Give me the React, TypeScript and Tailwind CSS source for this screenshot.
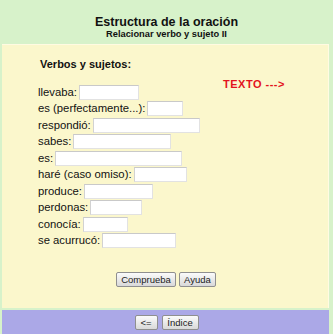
const rows = [
    { label: "llevaba:", w: 60 },
    { label: "es (perfectamente...):", w: 36 },
    { label: "respondió:", w: 107 },
    { label: "sabes:", w: 98 },
    { label: "es:", w: 127 },
    { label: "haré (caso omiso):", w: 53 },
    { label: "produce:", w: 69 },
    { label: "perdonas:", w: 52 },
    { label: "conocía:", w: 45 },
    { label: "se acurrucó:", w: 74 }
];

const Btn = ({ text, w }: { text: string; w: number }) => (
    <button
        className="h-[15px] rounded-[2px] border border-[#8f8f8f] bg-gradient-to-b from-[#fbfbfb] to-[#d9d9d9] text-[9.5px] leading-none text-[#222] font-['Liberation_Sans',sans-serif]"
        style={{ width: w }}>
        {text}
    </button>
);

const App = () => {
    return (
        <div className="w-[333px] h-[334px] bg-[#d7f2ca] flex flex-col font-['Liberation_Sans',Arial,sans-serif] text-[#111]">
            <div className="h-[44px] flex flex-col items-center pt-[15px]">
                <p className="text-[12.5px] font-bold leading-[14px]">Estructura de la oración</p>
                <p className="text-[9.3px] font-bold leading-[11px]">Relacionar verbo y sujeto II</p>
            </div>
            <div className="ml-[2px] mr-[4px] h-[264px] bg-[#fbf7cc] border-t border-r border-[#fffbe2] flex flex-col">
                <p className="mt-[12px] pl-[38px] text-[11px] font-bold leading-[14px]">Verbos y sujetos:</p>
                <div className="flex mt-[7px]">
                    <div className="w-[221px] pl-[36px] pt-[6px] flex flex-col gap-[0.5px]">
                        {rows.map((r) => (
                            <div key={r.label} className="flex items-center h-[16px] text-[11.3px]">
                                <span>{r.label}</span>
                                <input
                                    className="ml-[2px] h-[15px] bg-white border border-[#e2e2e2] border-t-[#c9c9c9] border-l-[#d2d2d2] outline-none"
                                    style={{ width: r.w }}
                                />
                            </div>
                        ))}
                    </div>
                    <p className="text-[11px] font-bold text-[#e3121c] leading-[12px] tracking-[0.5px]">TEXTO ---&gt;</p>
                </div>
                <div className="mt-auto mb-[21px] flex justify-center gap-[3px] pl-[2px]">
                    <Btn text="Comprueba" w={60} />
                    <Btn text="Ayuda" w={37} />
                </div>
            </div>
            <div className="mt-[2px] ml-[2px] mr-[4px] flex-1 bg-[#aba8e7] flex justify-center items-start pt-[5px] gap-[4px] pl-[2px]">
                <Btn text="<=" w={23} />
                <Btn text="Índice" w={37} />
            </div>
        </div>
    );
};

export default App;
